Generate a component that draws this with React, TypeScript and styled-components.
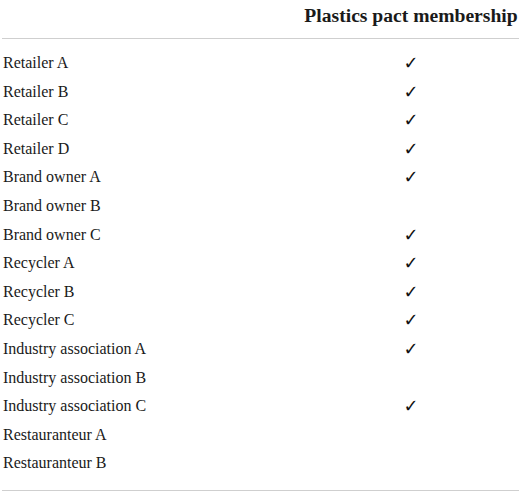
import React from "react";
import styled, { createGlobalStyle } from "styled-components";

const Global = createGlobalStyle`
  html, body { margin: 0; padding: 0; background: #ffffff; }
  body { font-family: "Liberation Serif", "Times New Roman", serif; color: #1a1a1a; }
`;

const Table = styled.div`
  width: 517px;
  margin-left: 2px;
  display: grid;
  grid-template-columns: 1fr 216px;
`;

const HeaderCell = styled.div<{ $align?: "left" | "center" }>`
  font-weight: 700;
  font-size: 19.6px;
  line-height: 22px;
  padding-top: 5px;
  padding-bottom: 11px;
  text-align: ${(p) => p.$align ?? "left"};
  border-bottom: 1px solid #cfcfcf;
  white-space: nowrap;
`;

const Body = styled.div`
  grid-column: 1 / -1;
  display: grid;
  grid-template-columns: 1fr 216px;
  grid-auto-rows: 28.6px;
  padding: 10px 0 12px;
  border-bottom: 1px solid #cfcfcf;
`;

const NameCell = styled.div`
  font-size: 16px;
  line-height: 28.6px;
  padding-left: 1px;
  white-space: nowrap;
`;

const MarkCell = styled.div`
  font-size: 18px;
  line-height: 28.6px;
  text-align: center;
  font-family: "DejaVu Sans", sans-serif;
  color: #111;
`;

const rows: [string, boolean][] = [
  ["Retailer A", true],
  ["Retailer B", true],
  ["Retailer C", true],
  ["Retailer D", true],
  ["Brand owner A", true],
  ["Brand owner B", false],
  ["Brand owner C", true],
  ["Recycler A", true],
  ["Recycler B", true],
  ["Recycler C", true],
  ["Industry association A", true],
  ["Industry association B", false],
  ["Industry association C", true],
  ["Restauranteur A", false],
  ["Restauranteur B", false],
];

export default function App() {
  return (
    <>
      <Global />
      <Table>
        <HeaderCell />
        <HeaderCell $align="center">Plastics pact membership</HeaderCell>
        <Body>
          {rows.map(([name, member]) => (
            <React.Fragment key={name}>
              <NameCell>{name}</NameCell>
              <MarkCell>{member ? "✓" : ""}</MarkCell>
            </React.Fragment>
          ))}
        </Body>
      </Table>
    </>
  );
}
